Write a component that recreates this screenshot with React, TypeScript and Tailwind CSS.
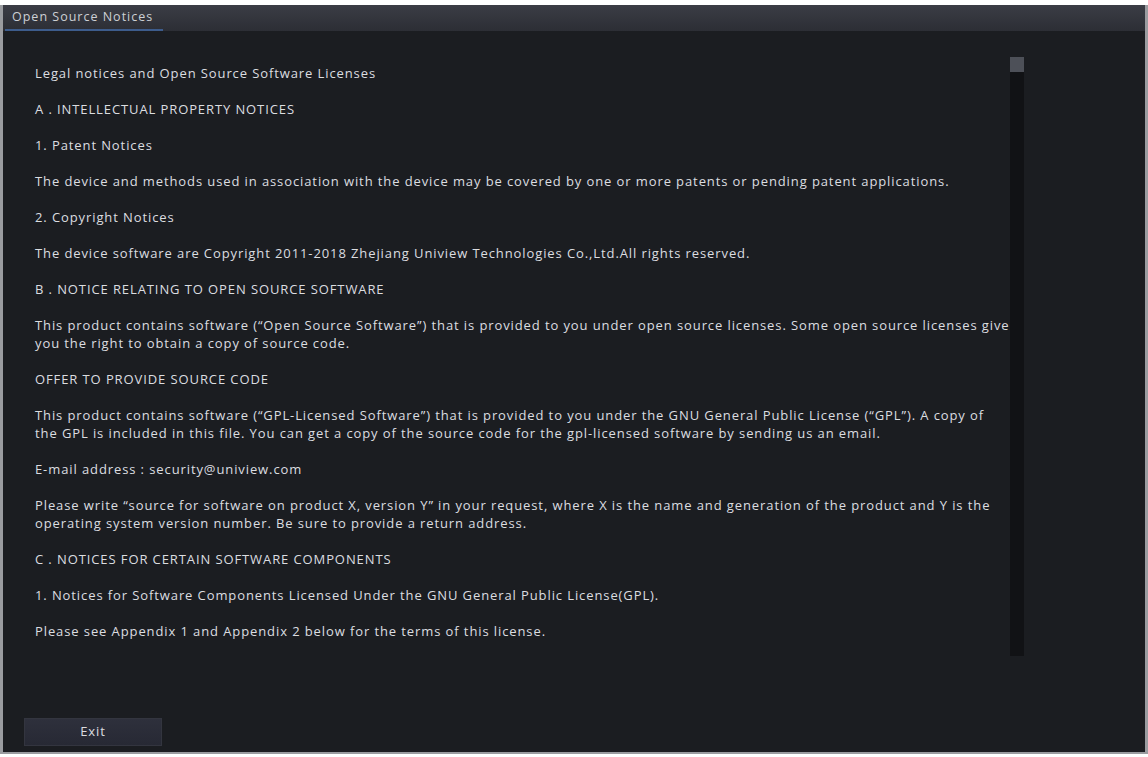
import React from "react";

const paragraphs: string[][] = [
  ["Legal notices and Open Source Software Licenses"],
  ["A . INTELLECTUAL PROPERTY NOTICES"],
  ["1. Patent Notices"],
  [
    "The device and methods used in association with the device may be covered by one or more patents or pending patent applications.",
  ],
  ["2. Copyright Notices"],
  [
    "The device software are Copyright 2011-2018 Zhejiang Uniview Technologies Co.,Ltd.All rights reserved.",
  ],
  ["B . NOTICE RELATING TO OPEN SOURCE SOFTWARE"],
  [
    "This product contains software (\u201COpen Source Software\u201D) that is provided to you under open source licenses. Some open source licenses give",
    "you the right to obtain a copy of source code.",
  ],
  ["OFFER TO PROVIDE SOURCE CODE"],
  [
    "This product contains software (\u201CGPL-Licensed Software\u201D) that is provided to you under the GNU General Public License (\u201CGPL\u201D). A copy of",
    "the GPL is included in this file. You can get a copy of the source code for the gpl-licensed software by sending us an email.",
  ],
  ["E-mail address : security@uniview.com"],
  [
    "Please write \u201Csource for software on product X, version Y\u201D in your request, where X is the name and generation of the product and Y is the",
    "operating system version number. Be sure to provide a return address.",
  ],
  ["C . NOTICES FOR CERTAIN SOFTWARE COMPONENTS"],
  ["1. Notices for Software Components Licensed Under the GNU General Public License(GPL)."],
  ["Please see Appendix 1 and Appendix 2 below for the terms of this license."],
];

const App = () => {
  return (
    <div className="w-[1148px] h-[757px] bg-white pt-[5px] font-['Open_Sans',sans-serif] overflow-hidden">
      <div className="h-[749px] flex flex-col border-l-[3px] border-r-[3px] border-b-[2px] border-[#9a9ca0] bg-[#1b1d21]">
        {/* title bar */}
        <div className="h-[26px] bg-gradient-to-b from-[#3b3d45] to-[#2c2e35] flex items-end">
          <div className="ml-[2px] w-[158px] h-[26px] flex items-center pl-[7px] border-b-[2px] border-[#3d5c8c] text-[12.5px] text-[#cdd0d5] tracking-[1px]">
            Open Source Notices
          </div>
        </div>

        {/* body */}
        <div className="flex-1 flex flex-col">
          <div className="flex pl-[32px]">
            <div className="w-[972px] pt-[33px] text-[13px] leading-[18px] tracking-[0.9px] text-[#dcdde0]">
              {paragraphs.map((lines, i) => (
                <p key={i} className="mb-[18px] whitespace-nowrap">
                  {lines.map((line, j) => (
                    <span key={j} className="block">
                      {line}
                    </span>
                  ))}
                </p>
              ))}
            </div>
            <div className="ml-[3px] mt-[26px] w-[14px] h-[599px] flex flex-col bg-[#111215]">
              <div className="h-[15px] bg-[#4d5058]" />
            </div>
          </div>

          <div className="mt-auto mb-[6px] ml-[21px]">
            <button className="w-[138px] h-[28px] bg-gradient-to-b from-[#2e303c] to-[#272934] border border-[#33353f] text-[13px] tracking-[0.9px] text-[#dcdde0] flex items-center justify-center">
              Exit
            </button>
          </div>
        </div>
      </div>
    </div>
  );
};

export default App;
